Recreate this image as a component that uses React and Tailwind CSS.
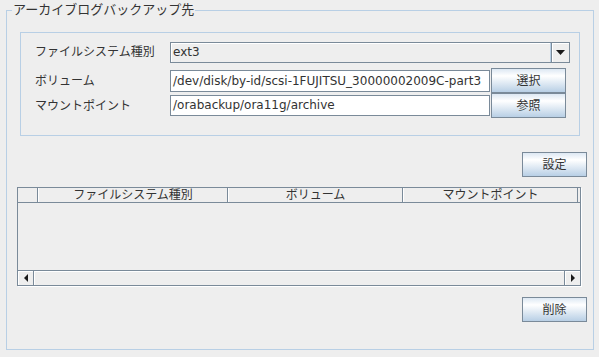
export default function App() {
  const btn =
    "flex items-center justify-center border border-[#7a8a99] bg-[linear-gradient(to_bottom,#dde8f3_0%,#ffffff_30%,#b8cfe5_100%)] text-[#333] text-[12px]";
  return (
    <div className="w-[599px] h-[357px] bg-[#eeeeee] pl-[6px] font-['DejaVu_Sans','Noto_Sans_CJK_JP',sans-serif] text-[12px] text-[#333]">
      <fieldset className="w-[588px] h-[350px] border border-[#b8cfe5]">
        <legend className="ml-[5px] px-[1px] h-[20px] leading-[20px] text-[13px] text-[#333]">
          アーカイブログバックアップ先
        </legend>
        <div className="flex flex-col">
          {/* inner panel */}
          <div className="mt-[12px] ml-[13px] w-[560px] h-[104px] border border-[#b8cfe5] pt-[9px] pl-[14px] flex flex-col">
            <div className="flex items-center h-[21px]">
              <div className="w-[135px] leading-[21px]">ファイルシステム種別</div>
              <div className="flex w-[400px] h-[21px] border border-[#7a8a99] bg-[#eeeeee]">
                <div className="flex-1 pl-[2px] leading-[19px] shadow-[inset_1px_1px_0_#ffffff] border-r border-[#b8cfe5]">
                  ext3
                </div>
                <div className="w-[18px] border-l border-[#7a8a99] bg-[#eeeeee] shadow-[inset_1px_1px_0_#ffffff] flex items-center justify-center">
                  <svg width="9" height="5" viewBox="0 0 9 5">
                    <polygon points="0,0 9,0 4.5,5" fill="#1a1a1a" />
                  </svg>
                </div>
              </div>
            </div>
            <div className="flex items-center h-[25px] mt-[5px]">
              <div className="w-[135px]">ボリューム</div>
              <div className="w-[320px] h-[22px] border border-[#7a8a99] bg-white pl-[2px] leading-[20px] whitespace-nowrap overflow-hidden">
                /dev/disk/by-id/scsi-1FUJITSU_30000002009C-part3
              </div>
              <div className={"ml-[1px] w-[75px] h-[25px] " + btn}>選択</div>
            </div>
            <div className="flex items-center h-[25px]">
              <div className="w-[135px]">マウントポイント</div>
              <div className="w-[320px] h-[21px] border border-[#7a8a99] bg-white pl-[2px] leading-[19px] whitespace-nowrap overflow-hidden">
                /orabackup/ora11g/archive
              </div>
              <div className={"ml-[1px] w-[75px] h-[25px] " + btn}>参照</div>
            </div>
          </div>

          <div className="flex justify-end pr-[6px] mt-[16px]">
            <div className={"w-[65px] h-[25px] " + btn}>設定</div>
          </div>

          {/* table */}
          <div className="mt-[10px] ml-[10px] w-[564px] h-[99px] border border-[#7a8a99] shadow-[1px_1px_0_#ffffff] flex flex-col">
            <div className="flex h-[15px] border-b border-[#7a8a99] text-[12px] leading-[14px] text-[#333]">
              <div className="w-[20px] border-r border-[#7a8a99]"></div>
              <div className="w-[190px] border-l border-white border-r border-r-[#7a8a99] text-center">
                ファイルシステム種別
              </div>
              <div className="w-[175px] border-l border-white border-r border-r-[#7a8a99] text-center">
                ボリューム
              </div>
              <div className="w-[175px] border-l border-white border-r border-r-[#7a8a99] text-center">
                マウントポイント
              </div>
            </div>
            <div className="flex-1 bg-[#eeeeee]"></div>
            <div className="flex h-[15px] border-t border-[#7a8a99]">
              <div className="w-[16px] border-r border-[#7a8a99] shadow-[inset_1px_1px_0_#ffffff] flex items-center justify-center">
                <svg width="4" height="8" viewBox="0 0 4 8">
                  <polygon points="4,0 4,8 0,4" fill="#1a1a1a" />
                </svg>
              </div>
              <div className="flex-1 shadow-[inset_1px_1px_0_#ffffff]"></div>
              <div className="w-[16px] border-l border-[#7a8a99] shadow-[inset_1px_1px_0_#ffffff] flex items-center justify-center">
                <svg width="4" height="8" viewBox="0 0 4 8">
                  <polygon points="0,0 0,8 4,4" fill="#1a1a1a" />
                </svg>
              </div>
            </div>
          </div>

          <div className="flex justify-end pr-[6px] mt-[11px]">
            <div className={"w-[65px] h-[25px] " + btn}>削除</div>
          </div>
        </div>
      </fieldset>
    </div>
  );
}
